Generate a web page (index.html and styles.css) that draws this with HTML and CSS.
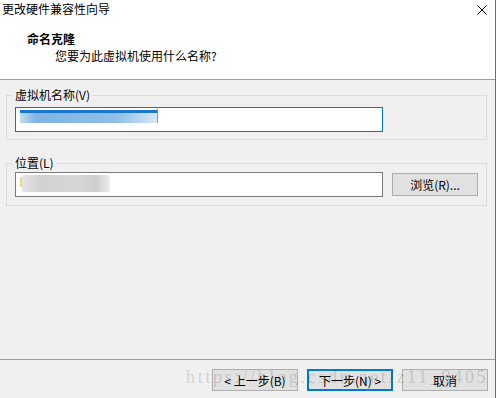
FILE: index.html
```html
<!DOCTYPE html>
<html lang="zh-CN">
<head>
  <meta charset="UTF-8">
  <title>更改硬件兼容性向导</title>
  <link rel="stylesheet" href="styles.css">
</head>
<body>
  <div class="wizard">
    <!-- header -->
    <div class="wizard-header">
      <div class="title-bar">
        <span class="title">更改硬件兼容性向导</span>
        <svg class="close-icon" width="10" height="10" viewBox="0 0 10 10">
          <path d="M0.5 0.5 L9.5 9.5 M9.5 0.5 L0.5 9.5" stroke="#000" stroke-width="1" fill="none"/>
        </svg>
      </div>
      <div class="page-title">命名克隆</div>
      <div class="page-desc">您要为此虚拟机使用什么名称?</div>
    </div>

    <!-- body -->
    <div class="wizard-body">
      <fieldset class="group group-name">
        <legend>虚拟机名称(V)</legend>
        <div class="field field-active">
          <span class="selection"></span>
          <span class="caret"></span>
        </div>
      </fieldset>

      <fieldset class="group group-location">
        <legend>位置(L)</legend>
        <div class="field-row">
          <div class="field">
            <span class="mark"></span>
            <span class="blurred"></span>
          </div>
          <button class="btn btn-browse">浏览(R)...</button>
        </div>
      </fieldset>
    </div>

    <!-- footer -->
    <div class="wizard-footer">
      <button class="btn">&lt; 上一步(B)</button>
      <button class="btn btn-primary">下一步(N) &gt;</button>
      <button class="btn">取消</button>
    </div>

    <div class="watermark">https://blog.csdn.net/z11_9405</div>
  </div>
</body>
</html>
```

FILE: styles.css
```css
body {
  margin: 0;
  background-color: #fff;
  font-family: "Noto Sans CJK SC", "Noto Sans", sans-serif;
  font-size: 12px;
  color: #000;
}

.wizard {
  position: relative;
  width: 495px;
  height: 398px;
  border-right: 1px solid #1883d7;
  display: flex;
  flex-direction: column;
  background-color: #f0f0f0;
  overflow: hidden;
}

.wizard-header {
  height: 80px;
  box-sizing: border-box;
  background-color: #fff;
  border-bottom: 1px solid #a0a0a0;
}

.title-bar {
  display: flex;
  justify-content: space-between;
  align-items: flex-start;
  padding: 1px 8px 0 2px;
  line-height: 16px;
}

.close-icon {
  margin-top: 4px;
}

.page-title {
  margin-top: 14px;
  padding-left: 27px;
  font-weight: bold;
  line-height: 16px;
}

.page-desc {
  margin-top: 1px;
  padding-left: 55px;
  line-height: 16px;
}

.wizard-body {
  flex: 1;
  padding: 0 8px 0 6px;
}

.group {
  margin: 0;
  min-width: 0;
  border: 1px solid #dcdcdc;
}

.group legend {
  margin-left: -2px;
  padding: 0 2px;
  line-height: 14px;
}

.group-name {
  margin-top: 8px;
  padding: 5px 8px 7px 8px;
}

.group-location {
  margin-top: 16px;
  padding: 2px 8px 8px 8px;
}

.field {
  width: 368px;
  height: 25px;
  box-sizing: border-box;
  border: 1px solid #7a7a7a;
  background-color: #fff;
  display: flex;
  align-items: flex-start;
}

.field-active {
  border-color: #0078d7;
}

/* blurred selected text */
.selection {
  margin: 2px 0 0 4px;
  width: 137px;
  height: 13px;
  background:
    linear-gradient(to bottom, #1a76d5 0, #1a76d5 3px, transparent 3px),
    linear-gradient(to right, #c3dbf2, #7fb4e5 12%, #8fbfe9 70%, #d6e7f7);
}

.caret {
  margin-top: 1px;
  width: 1px;
  height: 14px;
  background-color: #d9822b;
}

.field-row {
  display: flex;
  align-items: center;
  gap: 9px;
}

.mark {
  margin: 4px 0 0 4px;
  width: 2px;
  height: 10px;
  background-color: #f4d585;
}

.blurred {
  margin-top: 2px;
  width: 88px;
  height: 17px;
  background: linear-gradient(to right, #e4e4e4, #d2d2d2 20%, #d6d6d6 60%, #cfcfcf 85%, #ececec);
  border-radius: 2px;
}

.btn {
  width: 86px;
  height: 22px;
  box-sizing: border-box;
  padding: 0;
  border: 1px solid #adadad;
  background-color: #e1e1e1;
  font-family: inherit;
  font-size: 12px;
  color: #000;
}

.btn-browse {
  height: 23px;
}

.btn-primary {
  border: 2px solid #0078d7;
}

.wizard-footer {
  height: 39px;
  box-sizing: border-box;
  border-top: 1px solid #a0a0a0;
  padding: 9px 7px 0 0;
  display: flex;
  justify-content: flex-end;
  gap: 9px;
}

/* watermark drawn over the footer buttons */
.watermark {
  position: absolute;
  left: 186px;
  top: 367px;
  font-family: "Liberation Serif", serif;
  font-size: 18px;
  line-height: 20px;
  letter-spacing: 2.7px;
  color: rgba(0, 0, 0, 0.15);
  white-space: nowrap;
  pointer-events: none;
}
```
